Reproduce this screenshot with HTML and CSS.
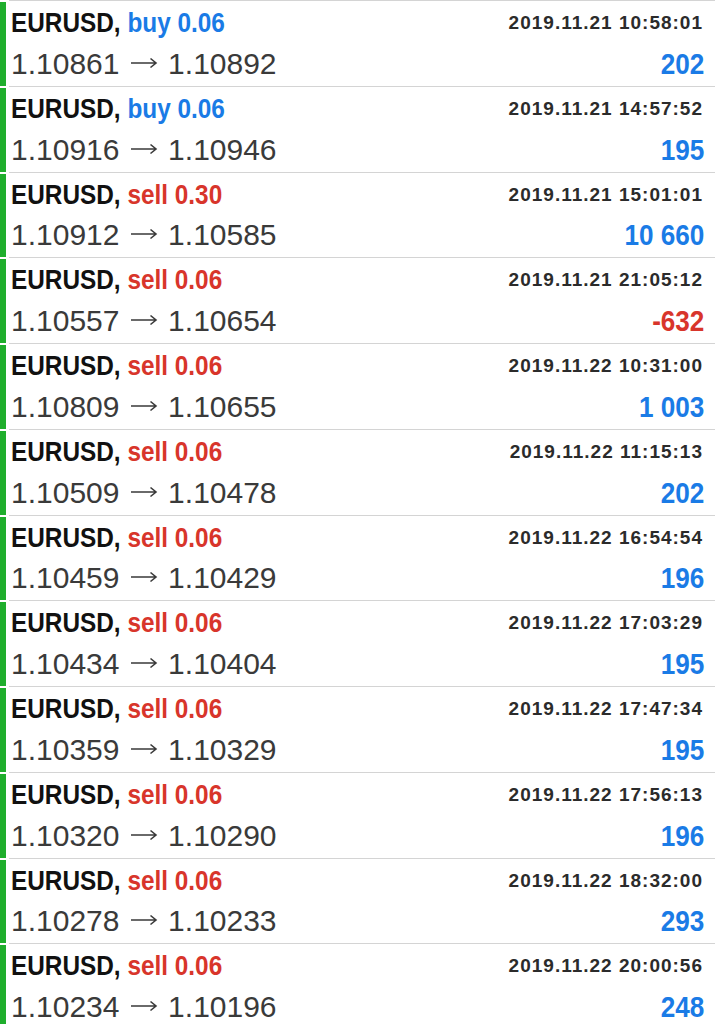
FILE: index.html
```html
<!DOCTYPE html>
<html lang="en">
<head>
  <meta charset="UTF-8">
  <meta name="viewport" content="width=device-width, initial-scale=1.0">
  <title>History</title>
  <link rel="stylesheet" href="styles.css">
</head>
<body>
  <ul class="deals">
    <li class="deal">
      <div class="bar"></div>
      <div class="info">
        <div class="title">EURUSD, <span class="buy">buy 0.06</span></div>
        <div class="time">2019.11.21 10:58:01</div>
        <div class="prices">1.10861 <svg class="arrow" viewBox="0 0 28 12"><path d="M1 6H26M20.5 1.5L26 6L20.5 10.5"/></svg> 1.10892</div>
        <div class="profit">202</div>
      </div>
    </li>
    <li class="deal">
      <div class="bar"></div>
      <div class="info">
        <div class="title">EURUSD, <span class="buy">buy 0.06</span></div>
        <div class="time">2019.11.21 14:57:52</div>
        <div class="prices">1.10916 <svg class="arrow" viewBox="0 0 28 12"><path d="M1 6H26M20.5 1.5L26 6L20.5 10.5"/></svg> 1.10946</div>
        <div class="profit">195</div>
      </div>
    </li>
    <li class="deal">
      <div class="bar"></div>
      <div class="info">
        <div class="title">EURUSD, <span class="sell">sell 0.30</span></div>
        <div class="time">2019.11.21 15:01:01</div>
        <div class="prices">1.10912 <svg class="arrow" viewBox="0 0 28 12"><path d="M1 6H26M20.5 1.5L26 6L20.5 10.5"/></svg> 1.10585</div>
        <div class="profit">10 660</div>
      </div>
    </li>
    <li class="deal">
      <div class="bar"></div>
      <div class="info">
        <div class="title">EURUSD, <span class="sell">sell 0.06</span></div>
        <div class="time">2019.11.21 21:05:12</div>
        <div class="prices">1.10557 <svg class="arrow" viewBox="0 0 28 12"><path d="M1 6H26M20.5 1.5L26 6L20.5 10.5"/></svg> 1.10654</div>
        <div class="profit loss">-632</div>
      </div>
    </li>
    <li class="deal">
      <div class="bar"></div>
      <div class="info">
        <div class="title">EURUSD, <span class="sell">sell 0.06</span></div>
        <div class="time">2019.11.22 10:31:00</div>
        <div class="prices">1.10809 <svg class="arrow" viewBox="0 0 28 12"><path d="M1 6H26M20.5 1.5L26 6L20.5 10.5"/></svg> 1.10655</div>
        <div class="profit">1 003</div>
      </div>
    </li>
    <li class="deal">
      <div class="bar"></div>
      <div class="info">
        <div class="title">EURUSD, <span class="sell">sell 0.06</span></div>
        <div class="time">2019.11.22 11:15:13</div>
        <div class="prices">1.10509 <svg class="arrow" viewBox="0 0 28 12"><path d="M1 6H26M20.5 1.5L26 6L20.5 10.5"/></svg> 1.10478</div>
        <div class="profit">202</div>
      </div>
    </li>
    <li class="deal">
      <div class="bar"></div>
      <div class="info">
        <div class="title">EURUSD, <span class="sell">sell 0.06</span></div>
        <div class="time">2019.11.22 16:54:54</div>
        <div class="prices">1.10459 <svg class="arrow" viewBox="0 0 28 12"><path d="M1 6H26M20.5 1.5L26 6L20.5 10.5"/></svg> 1.10429</div>
        <div class="profit">196</div>
      </div>
    </li>
    <li class="deal">
      <div class="bar"></div>
      <div class="info">
        <div class="title">EURUSD, <span class="sell">sell 0.06</span></div>
        <div class="time">2019.11.22 17:03:29</div>
        <div class="prices">1.10434 <svg class="arrow" viewBox="0 0 28 12"><path d="M1 6H26M20.5 1.5L26 6L20.5 10.5"/></svg> 1.10404</div>
        <div class="profit">195</div>
      </div>
    </li>
    <li class="deal">
      <div class="bar"></div>
      <div class="info">
        <div class="title">EURUSD, <span class="sell">sell 0.06</span></div>
        <div class="time">2019.11.22 17:47:34</div>
        <div class="prices">1.10359 <svg class="arrow" viewBox="0 0 28 12"><path d="M1 6H26M20.5 1.5L26 6L20.5 10.5"/></svg> 1.10329</div>
        <div class="profit">195</div>
      </div>
    </li>
    <li class="deal">
      <div class="bar"></div>
      <div class="info">
        <div class="title">EURUSD, <span class="sell">sell 0.06</span></div>
        <div class="time">2019.11.22 17:56:13</div>
        <div class="prices">1.10320 <svg class="arrow" viewBox="0 0 28 12"><path d="M1 6H26M20.5 1.5L26 6L20.5 10.5"/></svg> 1.10290</div>
        <div class="profit">196</div>
      </div>
    </li>
    <li class="deal">
      <div class="bar"></div>
      <div class="info">
        <div class="title">EURUSD, <span class="sell">sell 0.06</span></div>
        <div class="time">2019.11.22 18:32:00</div>
        <div class="prices">1.10278 <svg class="arrow" viewBox="0 0 28 12"><path d="M1 6H26M20.5 1.5L26 6L20.5 10.5"/></svg> 1.10233</div>
        <div class="profit">293</div>
      </div>
    </li>
    <li class="deal">
      <div class="bar"></div>
      <div class="info">
        <div class="title">EURUSD, <span class="sell">sell 0.06</span></div>
        <div class="time">2019.11.22 20:00:56</div>
        <div class="prices">1.10234 <svg class="arrow" viewBox="0 0 28 12"><path d="M1 6H26M20.5 1.5L26 6L20.5 10.5"/></svg> 1.10196</div>
        <div class="profit">248</div>
      </div>
    </li>
  </ul>
</body>
</html>
```

FILE: styles.css
```css
/* Lista transakcji w stylu aplikacji mobilnej */
body {
  margin: 0;
  background: #fff;
  font-family: "Liberation Sans", Arial, sans-serif;
  color: #333;
  overflow: hidden;
}
.deals {
  list-style: none;
  margin: 0;
  padding: 0;
}
.deal {
  display: grid;
  grid-template-columns: 6px 1fr;
  column-gap: 3px;
  height: 85.75px;
}
.bar {
  background: #1fae2c;
  margin-top: 2px;
}
.info {
  display: grid;
  grid-template-columns: 1fr auto;
  border-top: 1px solid #d4d4d4;
  padding: 3px 11px 0 2px;
}
/* Pierwsza linia: symbol i czas (wąska czcionka) */
.title {
  font-weight: bold;
  font-size: 28px;
  line-height: 38px;
  color: #111;
  white-space: nowrap;
  transform: scaleX(0.87);
  transform-origin: left center;
}
.buy {
  color: #1a7be6;
}
.sell {
  color: #d8352b;
}
.time {
  font-weight: bold;
  font-size: 19px;
  line-height: 38px;
  letter-spacing: 1px;
  color: #2b2b2b;
  text-align: right;
  margin-right: 1px;
}
/* Druga linia: ceny i zysk */
.prices {
  font-size: 30px;
  line-height: 40px;
  color: #3a3a3a;
  white-space: nowrap;
}
.arrow {
  width: 28px;
  height: 12px;
  margin: 0 2px;
  vertical-align: 5px;
  fill: none;
  stroke: #3a3a3a;
  stroke-width: 1.6;
}
.profit {
  font-weight: bold;
  font-size: 29px;
  line-height: 40px;
  color: #1a7be6;
  text-align: right;
  white-space: nowrap;
  transform: scaleX(0.9);
  transform-origin: right center;
}
.profit.loss {
  color: #d8352b;
}
```
